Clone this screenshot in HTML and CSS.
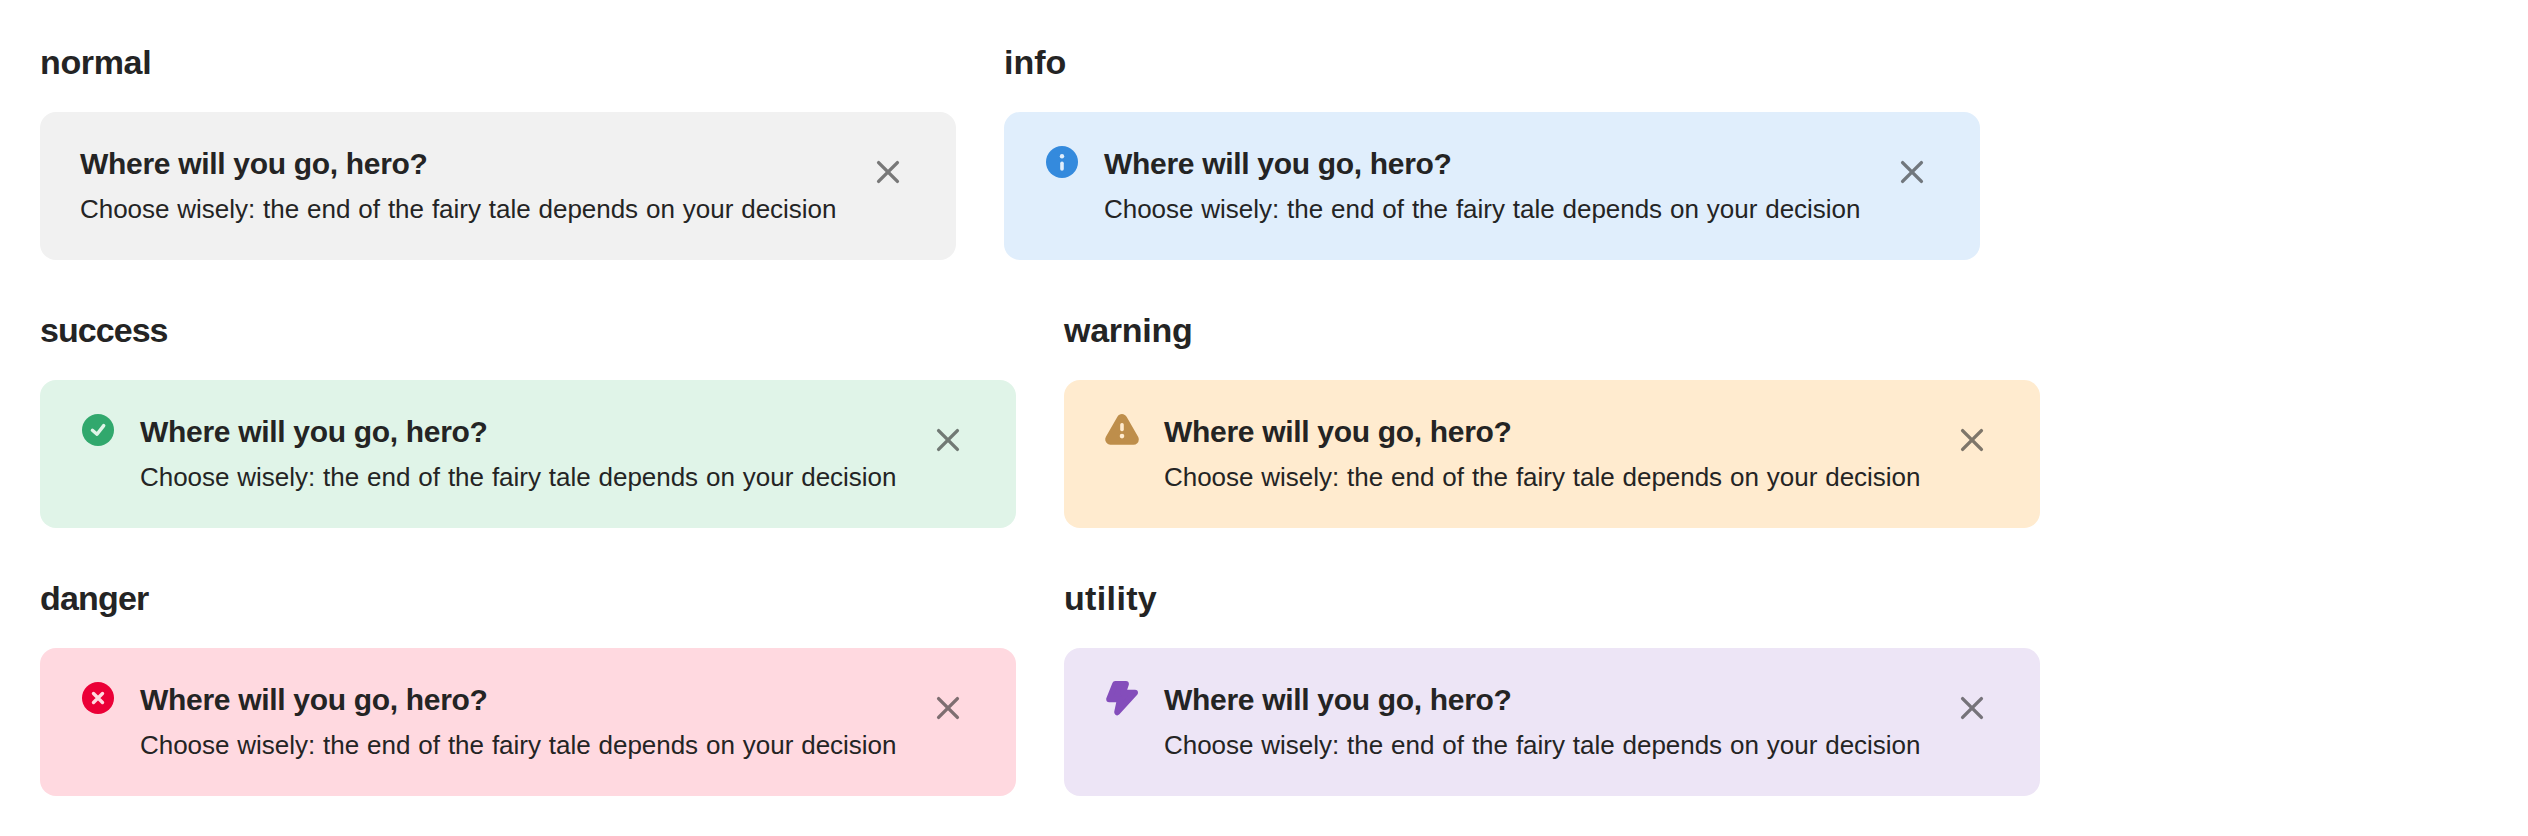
FILE: index.html
```html
<!DOCTYPE html>
<html lang="en">
<head>
<meta charset="utf-8">
<title>Toaster</title>
<link rel="stylesheet" href="styles.css">
</head>
<body>
<svg width="0" height="0" class="sprite">
  <symbol id="close" viewBox="0 0 48 48"><path d="M14.6 14.6 33.4 33.4M33.4 14.6 14.6 33.4" fill="none" stroke="currentColor" stroke-width="3.4" stroke-linecap="round"/></symbol>
</svg>
<main class="board">
  <div class="row">
    <section class="cell normal">
      <h2 class="heading">normal</h2>
      <div class="toast">
        <div class="text"><div class="title">Where will you go, hero?</div><div class="desc">Choose wisely: the end of the fairy tale depends on your decision</div></div>
        <svg class="close"><use href="#close"/></svg>
      </div>
    </section>
    <section class="cell info">
      <h2 class="heading">info</h2>
      <div class="toast">
        <svg class="icon" viewBox="0 0 36 36"><circle cx="18" cy="18" r="16" fill="currentColor"/><circle class="mark" cx="18" cy="12.2" r="2.2"/><rect class="mark" x="16.2" y="17.4" width="3.6" height="9.4" rx="1.8"/></svg>
        <div class="text"><div class="title">Where will you go, hero?</div><div class="desc">Choose wisely: the end of the fairy tale depends on your decision</div></div>
        <svg class="close"><use href="#close"/></svg>
      </div>
    </section>
  </div>
  <div class="row">
    <section class="cell success">
      <h2 class="heading">success</h2>
      <div class="toast">
        <svg class="icon" viewBox="0 0 36 36"><circle cx="18" cy="18" r="16" fill="currentColor"/><path class="line" d="M12.4 18.3 17 22.2 23.7 13.6"/></svg>
        <div class="text"><div class="title">Where will you go, hero?</div><div class="desc">Choose wisely: the end of the fairy tale depends on your decision</div></div>
        <svg class="close"><use href="#close"/></svg>
      </div>
    </section>
    <section class="cell warning">
      <h2 class="heading">warning</h2>
      <div class="toast">
        <svg class="icon" viewBox="0 0 36 36"><path d="M18 7.4 6.5 27.4H29.5Z" fill="currentColor" stroke="currentColor" stroke-width="10.6" stroke-linejoin="round"/><rect class="mark" x="16.2" y="11.1" width="3.6" height="8.1" rx="1.6"/><circle class="mark" cx="18" cy="24.1" r="2.3"/></svg>
        <div class="text"><div class="title">Where will you go, hero?</div><div class="desc">Choose wisely: the end of the fairy tale depends on your decision</div></div>
        <svg class="close"><use href="#close"/></svg>
      </div>
    </section>
  </div>
  <div class="row">
    <section class="cell danger">
      <h2 class="heading">danger</h2>
      <div class="toast">
        <svg class="icon" viewBox="0 0 36 36"><circle cx="18" cy="18" r="16" fill="currentColor"/><path class="line" d="M13.5 13.5 22.5 22.5M22.5 13.5 13.5 22.5"/></svg>
        <div class="text"><div class="title">Where will you go, hero?</div><div class="desc">Choose wisely: the end of the fairy tale depends on your decision</div></div>
        <svg class="close"><use href="#close"/></svg>
      </div>
    </section>
    <section class="cell utility">
      <h2 class="heading">utility</h2>
      <div class="toast">
        <svg class="icon" viewBox="0 0 36 36"><path d="M11.2 4.1H21.9L19 12.8H31L13.2 32.2 16 19.2H5.2Z" fill="currentColor" stroke="currentColor" stroke-width="6" stroke-linejoin="round"/></svg>
        <div class="text"><div class="title">Where will you go, hero?</div><div class="desc">Choose wisely: the end of the fairy tale depends on your decision</div></div>
        <svg class="close"><use href="#close"/></svg>
      </div>
    </section>
  </div>
</main>
</body>
</html>
```
FILE: styles.css
```css
body { margin: 0; background: #fff; color: #242424; font-family: "Liberation Sans", Arial, sans-serif; }
.sprite { display: block; }
.board { display: flex; flex-direction: column; gap: 48px; padding: 40px; }
.row { display: flex; gap: 48px; }
.heading { margin: 0 0 28px; font-size: 34px; line-height: 44px; font-weight: 700; letter-spacing: var(--tracking); }
.toast { display: flex; align-items: flex-start; box-sizing: border-box; height: 148px; padding: 34px 44px 0 40px; border-radius: 16px; background: var(--surface); }
.icon { flex: none; width: 36px; height: 36px; margin: -2px 24px 0 0; overflow: visible; color: var(--accent); }
.text { width: 756px; margin-right: 28px; white-space: nowrap; }
.title { font-size: 30px; line-height: 36px; font-weight: 700; letter-spacing: -0.31px; }
.desc { margin-top: 9px; font-size: 26px; line-height: 36px; letter-spacing: -0.04px; word-spacing: 0.8px; }
.close { flex: none; width: 48px; height: 48px; margin-top: 2px; color: #222; opacity: .58; }
.normal { --surface: #f1f1f1; --tracking: -0.35px; }
.info { --surface: #e0eefc; --accent: #348add; --tracking: 0; }
.success { --surface: #e0f4e8; --accent: #31a86d; --tracking: -0.95px; }
.warning { --surface: #ffebcf; --accent: #be8e4b; --tracking: -0.25px; }
.danger { --surface: #ffd9e0; --accent: #eb0037; --tracking: -0.8px; }
.utility { --surface: #ede5f6; --accent: #844dbb; --tracking: 0.35px; }
.mark { fill: var(--surface); }
.line { fill: none; stroke: var(--surface); stroke-width: 3.4; stroke-linecap: round; stroke-linejoin: round; }
```
